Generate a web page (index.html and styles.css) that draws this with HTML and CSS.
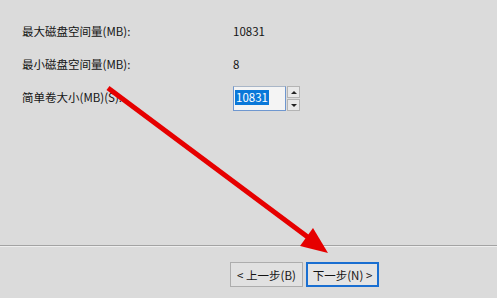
FILE: index.html
```html
<!DOCTYPE html>
<html lang="zh">
<head>
<meta charset="UTF-8">
<title>新建简单卷向导</title>
<link rel="stylesheet" href="styles.css">
</head>
<body>

<div class="wizard">
  <div class="content">
    <div class="row">
      <span class="label">最大磁盘空间量(MB):</span>
      <span class="value">10831</span>
    </div>
    <div class="row">
      <span class="label">最小磁盘空间量(MB):</span>
      <span class="value">8</span>
    </div>
    <div class="row">
      <span class="label">简单卷大小(MB)(S):</span>
      <div class="spin">
        <div class="spin-input"><span class="selected">10831</span></div>
        <div class="spin-buttons">
          <div class="spin-btn"><span class="tri-up"></span></div>
          <div class="spin-btn"><span class="tri-down"></span></div>
        </div>
      </div>
    </div>
  </div>

  <div class="separator"></div>

  <div class="footer">
    <button type="button" class="btn">&lt; 上一步(B)</button>
    <button type="button" class="btn btn-default">下一步(N) &gt;</button>
  </div>

  <!-- 红色箭头标注 -->
  <svg class="arrow" width="497" height="298" viewBox="0 0 497 298">
    <line x1="108" y1="88" x2="309" y2="238" stroke="#e60000" stroke-width="5"/>
    <polygon points="328,253 313,228 300,246" fill="#e60000"/>
  </svg>
</div>

</body>
</html>
```

FILE: styles.css
```css
body {
    margin: 0;
    padding: 0;
    background-color: #dbdbdb;
    font-family: "Noto Sans CJK SC", "Microsoft YaHei", sans-serif;
    font-size: 11.5px;
    color: #141414;
}

.wizard {
    position: relative;
    width: 497px;
    height: 298px;
    overflow: hidden;
}

.content {
    height: 245px;
    padding: 14px 0 0 22px;
    box-sizing: border-box;
}

.row {
    display: flex;
    align-items: center;
    height: 33px;
}

.label {
    width: 211px;
}

.spin {
    display: flex;
    align-items: stretch;
    height: 25px;
    margin-top: 4px;
}

.spin-input {
    width: 53px;
    border: 1px solid #6f97cf;
    border-top-color: #a9b6c7;
    background-color: #f4f4f4;
    padding: 2px 0 0 1px;
    box-sizing: border-box;
}

.selected {
    display: inline-block;
    background-color: #0a78d9;
    color: #ffffff;
    padding: 0 1px;
    line-height: 15px;
}

.spin-buttons {
    display: flex;
    flex-direction: column;
    gap: 1px;
    margin-left: 1px;
    width: 13px;
}

.spin-btn {
    flex: 1;
    background-color: #e8e8e8;
    border: 1px solid #b4b4b4;
    display: flex;
    align-items: center;
    justify-content: center;
}

.tri-up {
    width: 0;
    height: 0;
    border-left: 3px solid transparent;
    border-right: 3px solid transparent;
    border-bottom: 3px solid #222;
}

.tri-down {
    width: 0;
    height: 0;
    border-left: 3px solid transparent;
    border-right: 3px solid transparent;
    border-top: 3px solid #222;
}

.separator {
    height: 1px;
    background-color: #a3a3a3;
    border-bottom: 1px solid #eeeeee;
}

.footer {
    display: flex;
    justify-content: flex-end;
    gap: 3px;
    padding: 15px 118px 0 0;
}

.btn {
    width: 73px;
    height: 25px;
    font-family: inherit;
    font-size: 11.5px;
    color: #141414;
    background-color: #e1e1e1;
    border: 1px solid #adadad;
    padding: 0;
}

.btn-default {
    border: 2px solid #1a6fd1;
    background-color: #e4e4e4;
}

.arrow {
    position: absolute;
    top: 0;
    left: 0;
}
```
